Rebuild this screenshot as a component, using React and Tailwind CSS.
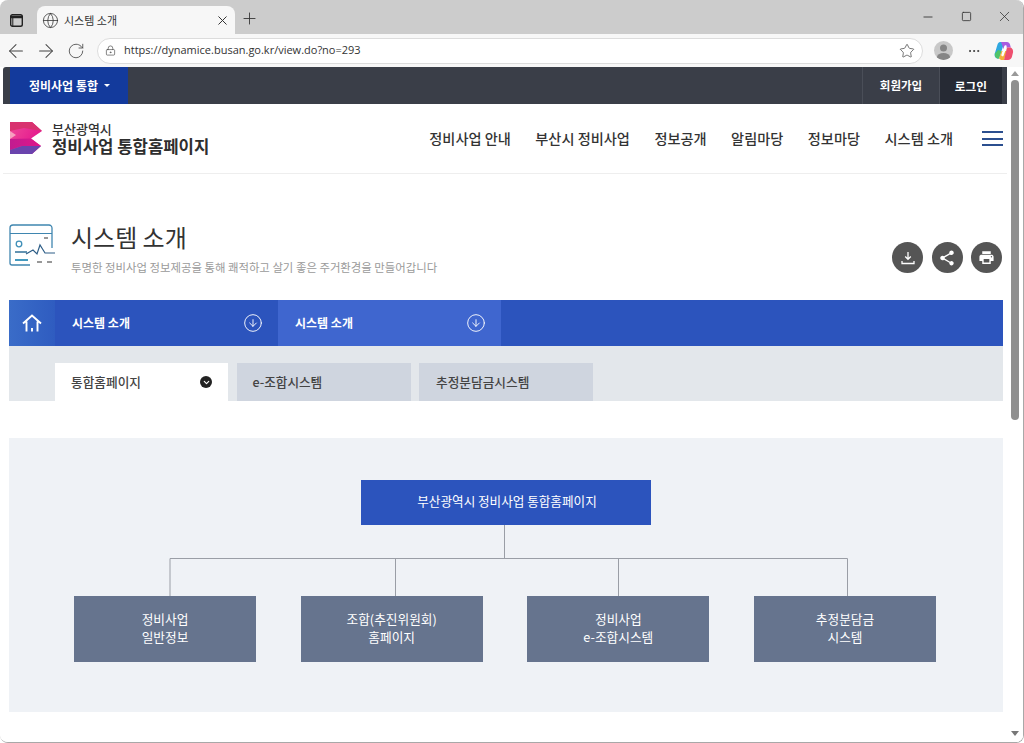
import React from "react";
import { ArrowLeft, ArrowRight, RotateCw, Globe, X, Plus, Star, Ellipsis, Minus, Square, LockKeyhole, CircleArrowDown, ChevronDown } from "lucide-react";

function Logo() {
  return (
    <svg width="33" height="33" viewBox="0 0 33 33" className="shrink-0">
      <defs>
        <linearGradient id="lg1" x1="0" y1="0" x2="1" y2="0.6">
          <stop offset="0" stopColor="#f04a9a" />
          <stop offset="1" stopColor="#e2128c" />
        </linearGradient>
        <linearGradient id="lg2" x1="0" y1="0" x2="1" y2="0">
          <stop offset="0" stopColor="#c01c90" />
          <stop offset="1" stopColor="#e0158a" />
        </linearGradient>
      </defs>
      <path d="M0 0H22L32 9L21 16.500L31 24L22 32H0Z" fill="url(#lg1)" />
      <path d="M0 0H22L32 9L14 6L0 9Z" fill="#d8326f" />
      <path d="M0 9L6 13L0 17Z" fill="#f7a0c0" />
      <path d="M0 17L21 16.500L31 24H12L0 28Z" fill="url(#lg2)" />
      <path d="M0 28L12 24H31L22 32H0Z" fill="#6a44ad" />
    </svg>
  );
}

function Copilot() {
  return (
    <svg width="20" height="20" viewBox="0 0 20 20">
      <path d="M6 1h4.500L7.500 10 5 17.500H4C1.500 17.500 0 15 .8 12.500L3.500 3.500C4 2 5 1 6 1Z" fill="#2fa8e0" />
      <path d="M1 12.500 4 9l3.500 1L5 17.500H4C1.500 17.500.5 15 1 12.500Z" fill="#4fc46a" />
      <path d="M7 1h6c1.500 0 2.500 1 3 2.500l.8 3H12L10 10 8.500 5Z" fill="#a85be0" />
      <path d="M5 17.500 7.500 10h5.500l-3 9H7Z" fill="#f2b13a" />
      <path d="M13 6.500h3c1.500 0 3.500 2 3 5l-1 4c-.5 2-2 3.500-4 3.500H10Z" fill="#ee4f6f" />
      <path d="M8.500 14 11.500 5.500" stroke="#fff" strokeWidth="2.400" strokeLinecap="round" />
    </svg>
  );
}

function SystemIcon() {
  return (
    <svg width="47" height="43" viewBox="0 0 47 43" fill="none" className="shrink-0">
      <path d="M43 24V4a3 3 0 0 0-3-3H4a3 3 0 0 0-3 3v35a2 2 0 0 0 2 2h18" stroke="#3f86b0" strokeWidth="1.300" />
      <path d="M1 9.500H43" stroke="#3f86b0" strokeWidth="1.200" />
      <path d="M35 14h4" stroke="#333" strokeWidth="1.200" />
      <circle cx="10" cy="20" r="2.800" stroke="#3f8fb8" strokeWidth="1.300" />
      <path d="M6 28H18" stroke="#2f6f98" strokeWidth="1.300" />
      <path d="M17 30 24 26 28 30 31 21 36 29H46" stroke="#2f5f88" strokeWidth="1.200" />
      <path d="M6 36H19" stroke="#2f8fb8" strokeWidth="1.800" />
      <path d="M28 38h5M38 38h5" stroke="#333" strokeWidth="1.200" />
    </svg>
  );
}

function ChildBox({ a, b }) {
  return (
    <div className="w-[182px] h-[66px] bg-[#66748e] text-white text-[12.700px] leading-[18px] flex flex-col items-center justify-center pb-[2px]">
      <span>{a}</span>
      <span>{b}</span>
    </div>
  );
}

function NavSel({ label, bg }) {
  return (
    <div className={`w-[223px] h-full flex items-center justify-between pl-[17px] pr-[15px] ${bg}`}>
      <span className="text-white text-[12px] font-bold">{label}</span>
      <CircleArrowDown size={20} strokeWidth={1.100} className="text-white" />
    </div>
  );
}

const circle = "w-[31px] h-[31px] rounded-full bg-[#555555] flex items-center justify-center";

export default function App() {
  return (
    <div className="w-[1024px] h-[743px] overflow-hidden bg-[#f7f7f7] rounded-[8px] border-r border-b border-[#a8a8a8] flex flex-col" style={{ fontFamily: '"Noto Sans CJK KR", "Noto Sans", sans-serif' }}>
      {/* Tab strip */}
      <div className="h-[34px] shrink-0 bg-[#cccccc] flex items-end">
        <div className="w-[37px] h-full flex items-center justify-center pt-[6px] pr-[5px]">
          <svg width="13" height="13" viewBox="0 0 13 13" fill="none">
            <rect x=".7" y=".7" width="11.600" height="11.600" rx="1.800" stroke="#222" strokeWidth="1.400" />
            <path d="M.7 3H12.300" stroke="#222" strokeWidth="2.400" />
            <path d="M2.800 3V12" stroke="#222" strokeWidth="1" />
          </svg>
        </div>
        <div className="w-[198px] h-[28px] bg-[#f7f7f7] rounded-t-[8px] flex items-center px-[5px]">
          <Globe size={17} strokeWidth={1.100} className="text-[#333]" />
          <span className="ml-[5px] text-[11px] text-[#333] flex-1">시스템 소개</span>
          <X size={15} strokeWidth={1.600} className="text-[#333]" />
        </div>
        <div className="w-[29px] h-full flex items-center justify-center pt-[3px]">
          <Plus size={19} strokeWidth={1.100} className="text-[#333]" />
        </div>
        <div className="flex-1 h-full flex items-center justify-end pr-[10.500px] pb-[1px]">
          <Minus size={14} strokeWidth={1.500} className="text-[#333]" />
          <Square size={11} strokeWidth={1.800} className="text-[#333] ml-[25.500px]" />
          <X size={17} strokeWidth={1.100} className="text-[#333] ml-[24px]" />
        </div>
      </div>
      {/* Toolbar */}
      <div className="h-[33px] shrink-0 bg-[#f7f7f7] flex items-center pl-[5px]">
        <ArrowLeft size={22} strokeWidth={1.100} className="text-[#444]" />
        <ArrowRight size={22} strokeWidth={1.100} className="text-[#444] ml-[8px]" />
        <RotateCw size={18} strokeWidth={1.100} className="text-[#444] ml-[10px]" />
        <div className="ml-[12px] w-[826px] h-[26px] rounded-full bg-white border border-[#dcdcdc] flex items-center pl-[7px] pr-[6px]">
          <LockKeyhole size={11} strokeWidth={1.400} className="text-[#444]" />
          <span className="ml-[8px] text-[11px] text-[#333] flex-1" style={{ fontFamily: '"Open Sans", sans-serif' }}>https://dynamice.busan.go.kr/view.do?no=293</span>
          <Star size={16} strokeWidth={1.100} className="text-[#444] mr-[1px]" />
        </div>
        <div className="ml-[11px] w-[19px] h-[19px] rounded-full bg-[#c8c8c8] overflow-hidden">
          <svg width="19" height="19" viewBox="0 0 19 19"><circle cx="9.500" cy="7" r="3.500" fill="#858585" /><ellipse cx="9.500" cy="16" rx="6.500" ry="4" fill="#858585" /></svg>
        </div>
        <Ellipsis size={14} strokeWidth={1.600} className="text-[#333] ml-[14px]" />
        <div className="ml-[13px]"><Copilot /></div>
      </div>

      {/* Page + scrollbar */}
      <div className="flex-1 min-h-0 flex pl-[3px] bg-white">
        <div className="w-[1004px] shrink-0 flex flex-col">
          {/* Top bar */}
          <div className="h-[37px] shrink-0 bg-[#3a3e48] rounded-tl-[3px] flex items-stretch pl-[7px] pr-[5px]">
            <div className="w-[118px] bg-[#133a9c] flex items-center pl-[19px] gap-[6px]">
              <span className="text-white text-[12px] font-bold">정비사업 통합</span>
              <span className="w-0 h-0 border-x-[3px] border-x-transparent border-t-[3px] border-t-white" />
            </div>
            <div className="flex-1" />
            <div className="w-[77px] border-l border-[#4a4e58] flex items-center justify-center text-white text-[11.500px] font-bold">회원가입</div>
            <div className="w-[63px] bg-[#262a34] border-l border-[#4a4e58] flex items-center justify-center text-white text-[11.700px] font-bold">로그인</div>
          </div>
          {/* Main header */}
          <div className="h-[70px] shrink-0 border-b border-[#eeeeee] flex items-center pl-[7px] pr-[4px]">
            <Logo />
            <div className="ml-[9px] flex flex-col text-[#333]">
              <span className="text-[13px] font-medium leading-[14px]">부산광역시</span>
              <span className="text-[16.700px] font-bold leading-[20px] text-[#2e2e2e]">정비사업 통합홈페이지</span>
            </div>
            <nav className="ml-auto flex items-center gap-[24.500px] text-[14.200px] font-medium text-[#333]">
              <span>정비사업 안내</span>
              <span>부산시 정비사업</span>
              <span>정보공개</span>
              <span>알림마당</span>
              <span>정보마당</span>
              <span>시스템 소개</span>
            </nav>
            <div className="ml-[29px] w-[21px] flex flex-col gap-[4.500px]">
              <span className="h-[2px] bg-[#2b4f8f]" />
              <span className="h-[2px] bg-[#2b4f8f]" />
              <span className="h-[2px] bg-[#2b4f8f]" />
            </div>
          </div>
          {/* Content */}
          <div className="flex-1 min-h-0 pl-[6px] pr-[4px]">
            {/* Title */}
            <div className="h-[126px] flex items-start pt-[50px]">
              <SystemIcon />
              <div className="ml-[15px] flex flex-col -mt-[4px]">
                <span className="text-[24px] leading-[34px] text-[#333]">시스템 소개</span>
                <span className="mt-[5px] text-[11.400px] leading-[17px] text-[#9a9a9a]">투명한 정비사업 정보제공을 통해 쾌적하고 살기 좋은 주거환경을 만들어갑니다</span>
              </div>
              <div className="ml-auto mt-[18px] mr-[1px] flex gap-[8.500px]">
                <div className={circle}>
                  <svg width="14" height="14" viewBox="0 0 14 14" fill="none" stroke="#fff"><path d="M7 1V8M4.200 5.500 7 8.300 9.800 5.500" strokeWidth="1.300" /><path d="M1 10V12.500H13V10" strokeWidth="1.300" /></svg>
                </div>
                <div className={circle}>
                  <svg width="18" height="18" viewBox="0 0 24 24" fill="#fff"><path d="M18 16.080c-.76 0-1.440.3-1.960.77L8.910 12.700c.05-.23.090-.46.090-.7s-.04-.47-.09-.7l7.050-4.110c.54.5 1.250.81 2.040.81 1.660 0 3-1.340 3-3s-1.340-3-3-3-3 1.340-3 3c0 .24.040.47.090.7L8.040 9.810C7.500 9.310 6.790 9 6 9c-1.660 0-3 1.340-3 3s1.340 3 3 3c.79 0 1.500-.31 2.040-.81l7.120 4.160c-.05.21-.08.43-.08.65 0 1.610 1.310 2.920 2.920 2.920 1.610 0 2.920-1.310 2.920-2.920s-1.310-2.920-2.920-2.920z" /></svg>
                </div>
                <div className={circle}>
                  <svg width="17" height="17" viewBox="0 0 24 24" fill="#fff"><path d="M19 8H5c-1.660 0-3 1.340-3 3v6h4v4h12v-4h4v-6c0-1.660-1.340-3-3-3zm-3 11H8v-5h8v5zm3-7c-.55 0-1-.45-1-1s.45-1 1-1 1 .45 1 1-.45 1-1 1zm-1-9H6v4h12V3z" /></svg>
                </div>
              </div>
            </div>
            {/* Blue nav */}
            <div className="h-[46px] bg-[#2c54bd] flex items-stretch">
              <div className="w-[46px] bg-gradient-to-r from-[#3a6cc8] to-[#2f5cc0] flex items-center justify-center">
                <svg width="20" height="20" viewBox="0 0 20 20" fill="none" stroke="#fff" strokeWidth="1.900"><path d="M1 10.500 10 2.500 19 10.500M4.500 8.500V18.500M15.500 8.500V18.500M10 15V18.500" /></svg>
              </div>
              <NavSel label="시스템 소개" bg="bg-[#2c54bd]" />
              <NavSel label="시스템 소개" bg="bg-[#3f66cf]" />
            </div>
            {/* Tabs */}
            <div className="h-[55px] bg-[#e3e7eb] flex items-end pl-[46px] gap-[8.500px]">
              <div className="w-[173px] h-[38px] bg-white flex items-center justify-between pl-[16px] pr-[16px] text-[12.700px] font-medium text-[#444]">
                <span>통합홈페이지</span>
                <span className="w-[12px] h-[12px] rounded-full bg-[#222] flex items-center justify-center"><ChevronDown size={9} strokeWidth={3} className="text-white" /></span>
              </div>
              <div className="w-[174px] h-[38px] bg-[#cfd5df] flex items-center pl-[16px] text-[12.600px] font-medium text-[#444]">e-조합시스템</div>
              <div className="w-[174px] h-[38px] bg-[#cfd5df] flex items-center pl-[17px] text-[12.700px] font-medium text-[#444]">추정분담금시스템</div>
            </div>
            {/* Chart */}
            <div className="mt-[37px] h-[274px] bg-[#eff2f6] flex flex-col pt-[42px]">
              <div className="w-[290px] h-[45px] ml-[352px] bg-[#2c54bd] text-white text-[12.600px] flex items-center justify-center pb-[2px] pl-[2px]">부산광역시 정비사업 통합홈페이지</div>
              <svg width="994" height="71" viewBox="0 0 994 71" className="block" fill="none">
                <path d="M495.500 0V33M161 71V33.500H838.500V71M386.500 33.500V71M609.500 33.500V71" stroke="#9a9ea6" strokeWidth="1" />
              </svg>
              <div className="flex pl-[65px] gap-[44.670px]">
                <ChildBox a="정비사업" b="일반정보" />
                <ChildBox a="조합(추진위원회)" b="홈페이지" />
                <ChildBox a="정비사업" b="e-조합시스템" />
                <ChildBox a="추정분담금" b="시스템" />
              </div>
            </div>
          </div>
        </div>
        {/* Scrollbar */}
        <div className="flex-1 bg-white flex flex-col items-center pt-[4px] pb-[6px]">
          <span className="w-0 h-0 border-x-[4px] border-x-transparent border-b-[5px] border-b-[#999]" />
          <span className="mt-[4px] w-[8px] h-[340px] rounded-full bg-[#8f8f8f]" />
          <span className="mt-auto w-0 h-0 border-x-[4px] border-x-transparent border-t-[5px] border-t-[#777]" />
        </div>
      </div>
    </div>
  );
}
